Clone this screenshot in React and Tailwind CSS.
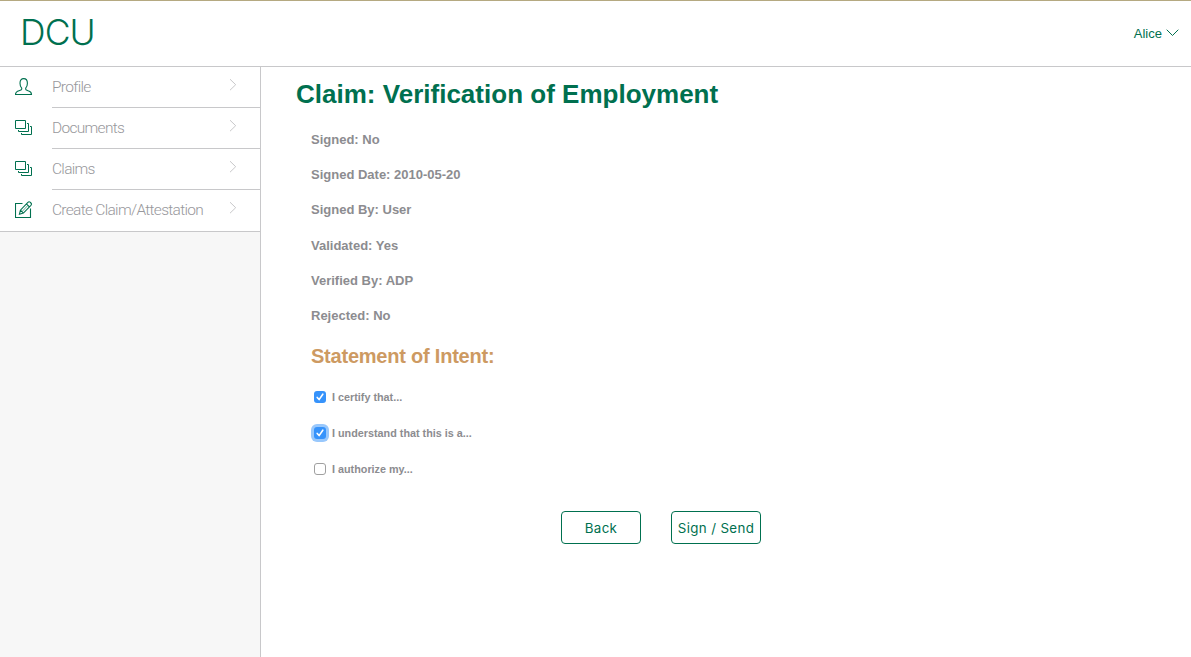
const stroke = { fill: 'none', stroke: '#00704f', strokeWidth: 1.1 };

function UserIcon() {
  return (
    <svg width="18" height="18" viewBox="0 0 18 18" {...stroke}>
      <path d="M6.7 10.2C5.6 9 5 7.6 5 5.2C5 2.2 6.3 .6 8.7 .6S12.4 2.2 12.4 5.2C12.4 7.6 11.8 9 10.7 10.2V11.2C10.7 12 11.8 12.2 13.2 12.7C15.6 13.4 16.5 14.4 16.5 16.5H.5C.5 14.4 1.6 13.4 4 12.7C5.6 12.2 6.7 12 6.7 11.2Z" />
    </svg>
  );
}

function StackIcon() {
  return (
    <svg width="18" height="18" viewBox="0 0 18 18" {...stroke} strokeWidth="1">
      <path d="M.5 1.5H10.5V9.5H.5ZM12 4.5H13.5V12.5H3.5V11M15 7.5H16.5V15.5H6.5V14" />
    </svg>
  );
}

function EditIcon() {
  return (
    <svg width="18" height="18" viewBox="0 0 18 18" {...stroke}>
      <path d="M7.5 2.5H.5V16.5H15.5V7.5" />
      <path d="M4.4 13.3L5.4 9.2L12.9 1.3Q14 .2 15.1 1.2L15.9 2Q17 3.1 15.9 4.3L8.4 12.1ZM5.4 9.2L8.4 12.1M11.4 2.9L14.4 5.8" />
      <path d="M12.9 4.4L7 10.6" strokeWidth=".6" />
    </svg>
  );
}

const items = [
  ['Profile', UserIcon],
  ['Documents', StackIcon],
  ['Claims', StackIcon],
  ['Create Claim/Attestation', EditIcon],
];

const details = ['Signed: No', 'Signed Date: 2010-05-20', 'Signed By: User', 'Validated: Yes', 'Verified By: ADP', 'Rejected: No'];

const statements = [
  { text: 'I certify that...', checked: true },
  { text: 'I understand that this is a...', checked: true, focused: true },
  { text: 'I authorize my...' },
];

function Box({ checked, focused }) {
  if (!checked) return <span className="size-3 rounded-[3px] border border-[#a0a0a0] bg-white" />;
  return (
    <span className={`size-3 rounded-[3px] bg-[#3693fb] ${focused ? 'ring-3 ring-[#99c8fc]' : ''}`}>
      <svg width="12" height="12" viewBox="0 0 12 12" fill="none" stroke="#fff" strokeWidth="1.6" strokeLinecap="round" strokeLinejoin="round">
        <path d="M3.2 6.4L5.1 8.6L8.8 3.2" />
      </svg>
    </span>
  );
}

export default function App() {
  return (
    <div className="flex h-[657px] w-full flex-col bg-white font-['Liberation_Sans',sans-serif] text-[#8c8c90]">
      <header className="flex h-[67px] shrink-0 items-center justify-between border-t border-b border-t-[#b5a981] border-b-[#c8c8ca] pr-3 pl-5 text-[#00704f]">
        <div className="pb-[1px] font-['Inter',sans-serif] text-[35.5px] leading-none font-light tracking-[-0.9px]">DCU</div>
        <div className="flex items-center gap-1 text-[13px]">
          <span>Alice</span>
          <svg className="mb-[2px]" width="13" height="8" viewBox="0 0 13 8" {...stroke} strokeWidth="1">
            <path d="M.7 .7L6.5 6.5L12.3 .7" />
          </svg>
        </div>
      </header>
      <div className="flex min-h-0 flex-1">
        <aside className="w-[261px] shrink-0 border-r border-[#c8c8ca] bg-[#f7f7f7]">
          <nav className="border-b border-[#c8c8ca] bg-white">
            {items.map(([label, Icon], i) => (
              <a key={label} className="flex h-[41px] pl-[15px]">
                <span className="w-[37px] pt-[11px]"><Icon /></span>
                <span className={`flex flex-1 justify-between pr-[23px] ${i < 3 ? 'border-b border-[#c8c8ca]' : ''}`}>
                  <span className="pt-[10px] font-['Roboto',sans-serif] text-[15.5px] leading-5 font-light tracking-[-0.7px] whitespace-nowrap text-[#98989c]">{label}</span>
                  <svg className="mt-[11px]" width="8" height="13" viewBox="0 0 8 13" fill="none" stroke="#c8c8ca">
                    <path d="M1 1.2L6.7 6.7L1 12.2" />
                  </svg>
                </span>
              </a>
            ))}
          </nav>
        </aside>
        <main className="flex-1 pt-3 pl-[35px]">
          <h1 className="text-[26px] leading-[30px] font-bold tracking-[0.01px] text-[#00704f]">Claim: Verification of Employment</h1>
          <div className="pl-[15px] font-bold">
            <div className="mt-[13px]">
              {details.map((d) => (
                <p key={d} className="h-[35.2px] pt-[10px] text-[13px] leading-4">{d}</p>
              ))}
            </div>
            <h2 className="mt-[10.8px] text-[20px] leading-6 tracking-[-0.22px] text-[#cd9a62]">Statement of Intent:</h2>
            <div className="mt-[11px]">
              {statements.map((s) => (
                <label key={s.text} className="flex h-9 items-center gap-[6px] pl-[3px] text-[10.8px] leading-4">
                  <Box checked={s.checked} focused={s.focused} />
                  <span>{s.text}</span>
                </label>
              ))}
            </div>
          </div>
          <div className="mt-6 ml-[265px] flex gap-[30px] font-['Inter',sans-serif] text-[13.33px] leading-5 tracking-[0.36px] text-[#00704f]">
            <button className="h-[33px] w-20 rounded border border-[#00704f] pt-px">Back</button>
            <button className="h-[33px] w-[90px] rounded border border-[#00704f] pt-px whitespace-nowrap">Sign / Send</button>
          </div>
        </main>
      </div>
    </div>
  );
}
